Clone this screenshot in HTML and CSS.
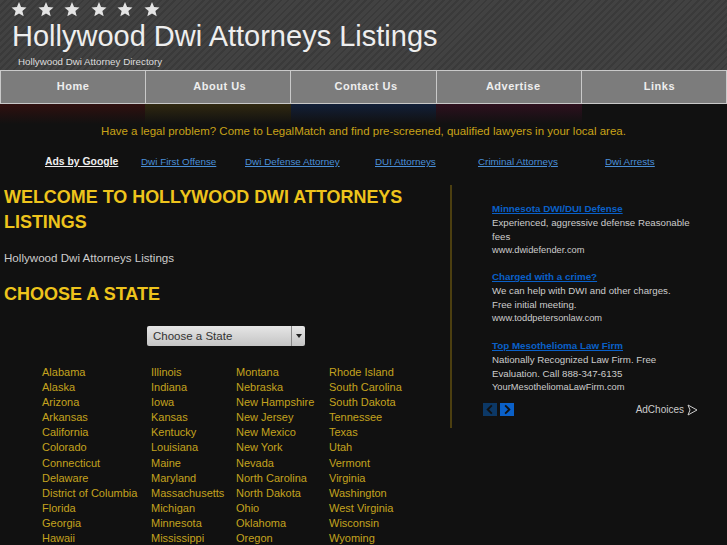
FILE: index.html
```html
<!DOCTYPE html>
<html lang="en">
<head>
<meta charset="UTF-8">
<meta name="viewport" content="width=device-width, initial-scale=1.0">
<title>Hollywood Dwi Attorneys Listings</title>
<link rel="stylesheet" href="styles.css">
</head>
<body>

<div class="header">
    <div class="stars">
        <svg viewBox="0 0 16 16"><polygon points="8,0 10.2,5.4 16,5.9 11.6,9.6 13,15.3 8,12.3 3,15.3 4.4,9.6 0,5.9 5.8,5.4"/></svg>
        <svg viewBox="0 0 16 16"><polygon points="8,0 10.2,5.4 16,5.9 11.6,9.6 13,15.3 8,12.3 3,15.3 4.4,9.6 0,5.9 5.8,5.4"/></svg>
        <svg viewBox="0 0 16 16"><polygon points="8,0 10.2,5.4 16,5.9 11.6,9.6 13,15.3 8,12.3 3,15.3 4.4,9.6 0,5.9 5.8,5.4"/></svg>
        <svg viewBox="0 0 16 16"><polygon points="8,0 10.2,5.4 16,5.9 11.6,9.6 13,15.3 8,12.3 3,15.3 4.4,9.6 0,5.9 5.8,5.4"/></svg>
        <svg viewBox="0 0 16 16"><polygon points="8,0 10.2,5.4 16,5.9 11.6,9.6 13,15.3 8,12.3 3,15.3 4.4,9.6 0,5.9 5.8,5.4"/></svg>
        <svg viewBox="0 0 16 16"><polygon points="8,0 10.2,5.4 16,5.9 11.6,9.6 13,15.3 8,12.3 3,15.3 4.4,9.6 0,5.9 5.8,5.4"/></svg>
    </div>
    <div class="site-title">Hollywood Dwi Attorneys Listings</div>
    <div class="site-sub">Hollywood Dwi Attorney Directory</div>
</div>

<div class="nav">
    <a href="#">Home</a>
    <a href="#">About Us</a>
    <a href="#">Contact Us</a>
    <a href="#">Advertise</a>
    <a href="#">Links</a>
</div>

<div class="nav-glow">
    <div class="glow-red"></div>
    <div class="glow-yellow"></div>
    <div class="glow-blue"></div>
    <div class="glow-pink"></div>
    <div class="glow-none"></div>
</div>

<div class="promo">Have a legal problem? Come to LegalMatch and find pre-screened, qualified lawyers in your local area.</div>

<div class="adlinks">
    <a class="ads-by" href="#">Ads by Google</a>
    <a class="l1" href="#">Dwi First Offense</a>
    <a class="l2" href="#">Dwi Defense Attorney</a>
    <a class="l3" href="#">DUI Attorneys</a>
    <a class="l4" href="#">Criminal Attorneys</a>
    <a class="l5" href="#">Dwi Arrests</a>
</div>

<div class="main">
    <div class="content">
        <h1>WELCOME TO HOLLYWOOD DWI ATTORNEYS LISTINGS</h1>
        <p class="intro">Hollywood Dwi Attorneys Listings</p>
        <h2>CHOOSE A STATE</h2>
        <div class="select-row">
            <div class="fake-select">
                <span class="select-label">Choose a State</span>
                <span class="select-btn"><span class="select-arrow"></span></span>
            </div>
        </div>
        <div class="states">
            <ul class="col1">
                <li>Alabama</li><li>Alaska</li><li>Arizona</li><li>Arkansas</li><li>California</li><li>Colorado</li><li>Connecticut</li><li>Delaware</li><li>District of Columbia</li><li>Florida</li><li>Georgia</li><li>Hawaii</li>
            </ul>
            <ul class="col2">
                <li>Illinois</li><li>Indiana</li><li>Iowa</li><li>Kansas</li><li>Kentucky</li><li>Louisiana</li><li>Maine</li><li>Maryland</li><li>Massachusetts</li><li>Michigan</li><li>Minnesota</li><li>Mississippi</li>
            </ul>
            <ul class="col3">
                <li>Montana</li><li>Nebraska</li><li>New Hampshire</li><li>New Jersey</li><li>New Mexico</li><li>New York</li><li>Nevada</li><li>North Carolina</li><li>North Dakota</li><li>Ohio</li><li>Oklahoma</li><li>Oregon</li>
            </ul>
            <ul class="col4">
                <li>Rhode Island</li><li>South Carolina</li><li>South Dakota</li><li>Tennessee</li><li>Texas</li><li>Utah</li><li>Vermont</li><li>Virginia</li><li>Washington</li><li>West Virginia</li><li>Wisconsin</li><li>Wyoming</li>
            </ul>
        </div>
    </div>

    <div class="sidebar">
        <div class="ad">
            <a href="#">Minnesota DWI/DUI Defense</a>
            <p>Experienced, aggressive defense Reasonable fees</p>
            <span class="ad-url">www.dwidefender.com</span>
        </div>
        <div class="ad">
            <a href="#">Charged with a crime?</a>
            <p>We can help with DWI and other charges.<br>Free initial meeting.</p>
            <span class="ad-url">www.toddpetersonlaw.com</span>
        </div>
        <div class="ad">
            <a href="#">Top Mesothelioma Law Firm</a>
            <p>Nationally Recognized Law Firm. Free<br>Evaluation. Call 888-347-6135</p>
            <span class="ad-url">YourMesotheliomaLawFirm.com</span>
        </div>
        <div class="ad-foot">
            <span class="pager pager-off"><svg viewBox="0 0 14 14"><polyline points="9,2.5 4.5,7 9,11.5"/></svg></span>
            <span class="pager"><svg viewBox="0 0 14 14"><polyline points="5,2.5 9.5,7 5,11.5"/></svg></span>
            <span class="adchoices">AdChoices
                <svg viewBox="0 0 11 12"><polygon points="1,1 10,6 1,11 3,6"/></svg>
            </span>
        </div>
    </div>
</div>

</body>
</html>
```

FILE: styles.css
```css
html, body {
    height: 545px;
    overflow: hidden;
}
body {
    font-family: "Liberation Sans", Arial, sans-serif;
    background-color: #111;
    color: #ccc;
    margin: 0;
    padding: 0;
}
a {
    color: #4a8fd8;
}

.header {
    height: 70px;
    box-sizing: border-box;
    padding: 2px 0 0 12px;
    background-color: #3c3c3c;
    background-image: repeating-linear-gradient(135deg, #424242 0, #424242 3px, #3a3a3a 3px, #3a3a3a 5px);
}
.stars {
    display: flex;
    gap: 10.6px;
    margin-left: -1px;
}
.stars svg {
    width: 16px;
    height: 15px;
    fill: #e4e4e4;
}
.site-title {
    font-size: 29px;
    line-height: 34px;
    color: #eee;
    margin-top: 2px;
}
.site-sub {
    font-size: 9.75px;
    line-height: 12px;
    color: #ddd;
    margin: 3px 0 0 6px;
}

.nav {
    display: flex;
    height: 34px;
    background-color: #7c7c7c;
}
.nav a {
    flex: 1 1 0;
    box-sizing: border-box;
    border: 1px solid #c9c9c9;
    border-left: none;
    line-height: 31px;
    text-align: center;
    color: #eee;
    font-size: 11px;
    font-weight: bold;
    letter-spacing: 0.5px;
    text-decoration: none;
}
.nav a:first-child {
    border-left: 1px solid #c9c9c9;
}
.nav a:nth-child(2) { text-indent: 3px; }
.nav a:nth-child(3) { text-indent: 5px; }
.nav a:nth-child(4) { text-indent: 9px; }
.nav a:nth-child(5) { text-indent: 11px; }

.nav-glow {
    display: flex;
    height: 20px;
}
.nav-glow div {
    flex: 1;
}
.glow-red {
    background: linear-gradient(#30100f, #111);
}
.glow-yellow {
    background: linear-gradient(#302810, #111);
}
.glow-blue {
    background: linear-gradient(#121f38, #111);
}
.glow-pink {
    background: linear-gradient(#2e101e, #111);
}
.glow-none {
    background: #111;
}

.promo {
    text-align: center;
    color: #c9a318;
    font-size: 11.5px;
    line-height: 14px;
}

.adlinks {
    position: relative;
    height: 14px;
    margin-top: 17px;
    font-size: 9.85px;
    line-height: 14px;
}
.adlinks a {
    position: absolute;
    top: 0;
}
.adlinks .ads-by {
    left: 45px;
    color: #eee;
    font-weight: bold;
    font-size: 10.4px;
}
.adlinks .l1 { left: 141px; }
.adlinks .l2 { left: 245px; }
.adlinks .l3 { left: 375px; }
.adlinks .l4 { left: 478px; }
.adlinks .l5 { left: 605px; }

.main {
    display: flex;
    margin-top: 16px;
}
.content {
    width: 450px;
    box-sizing: border-box;
    padding: 0 4px;
}
h1, h2 {
    color: #eec41c;
    line-height: 25px;
    margin: 0;
}
h1 {
    font-size: 17.95px;
}
h2 {
    font-size: 18px;
    margin-top: 17px;
}
.intro {
    font-size: 11.6px;
    line-height: 14px;
    color: #ccc;
    margin: 16px 0 0;
}
.select-row {
    padding-left: 143px;
    margin-top: 19px;
}
.fake-select {
    display: flex;
    width: 158px;
    height: 20px;
    border-radius: 2px;
    background: linear-gradient(#e6e6e6, #c4c4c4);
    color: #333;
    font-size: 11.5px;
    line-height: 20px;
}
.select-label {
    flex: 1;
    padding-left: 6px;
}
.select-btn {
    display: flex;
    align-items: center;
    justify-content: center;
    width: 13px;
    border-left: 1px solid #888;
}
.select-arrow {
    border-left: 3.5px solid transparent;
    border-right: 3.5px solid transparent;
    border-top: 4px solid #222;
}

.states {
    display: flex;
    padding-left: 38px;
    margin-top: 19px;
}
.states ul {
    list-style: none;
    margin: 0;
    padding: 0;
    font-size: 11px;
    line-height: 15.1px;
    color: #c4a31e;
}
.states .col1 { width: 109px; }
.states .col2 { width: 85px; }
.states .col3 { width: 93px; }

.sidebar {
    width: 277px;
    height: 243px;
    box-sizing: border-box;
    border-left: 2px solid #4c3f10;
    padding: 17px 0 0 40px;
    font-size: 9.7px;
    line-height: 14px;
    color: #ccc;
}
.ad {
    height: 68.3px;
}
.ad a {
    display: block;
    color: #0a60c8;
    font-weight: bold;
    font-size: 9.8px;
}
.ad p {
    margin: 0;
    width: 215px;
}
.ad-url {
    display: block;
    font-size: 9.3px;
    line-height: 13px;
}
.ad-foot {
    display: flex;
    align-items: center;
    gap: 3px;
    margin: -4px 0 0 -9px;
    width: 215px;
}
.pager {
    width: 14px;
    height: 13px;
    background-color: #0a60c8;
}
.pager-off {
    background-color: #0c3866;
}
.pager svg {
    display: block;
    width: 14px;
    height: 13px;
    fill: none;
    stroke: #111;
    stroke-width: 2;
}
.adchoices {
    display: flex;
    align-items: center;
    gap: 3px;
    margin-left: auto;
    color: #ccc;
    font-size: 10px;
}
.adchoices svg {
    width: 11px;
    height: 12px;
    fill: none;
    stroke: #ccc;
    stroke-width: 1;
}
```
